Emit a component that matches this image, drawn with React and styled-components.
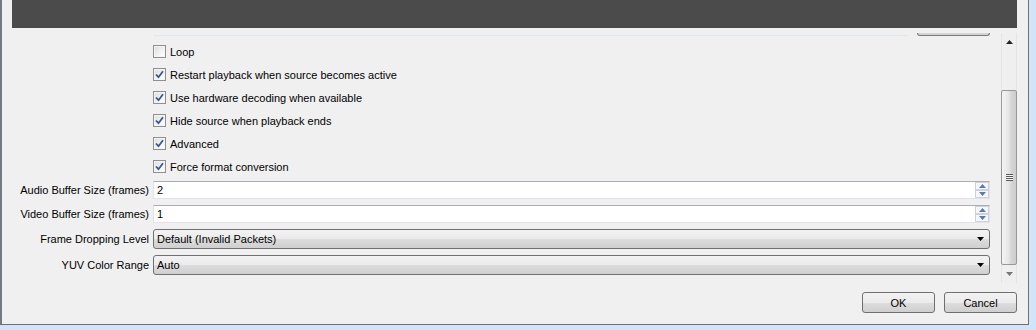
import React from "react";
import styled, { createGlobalStyle } from "styled-components";

// 설정 창 아래쪽 (미디어 소스 속성)
const GlobalStyle = createGlobalStyle`
  html, body {
    margin: 0;
    padding: 0;
    background: #d2e5f8;
  }
  body {
    font-family: "Liberation Sans", Arial, sans-serif;
    font-size: 11px;
    color: #000;
  }
`;

const checks = [
  { label: "Loop", checked: false },
  { label: "Restart playback when source becomes active", checked: true },
  { label: "Use hardware decoding when available", checked: true },
  { label: "Hide source when playback ends", checked: true },
  { label: "Advanced", checked: true },
  { label: "Force format conversion", checked: true },
];

const spins = [
  { label: "Audio Buffer Size (frames)", value: "2" },
  { label: "Video Buffer Size (frames)", value: "1" },
];

const combos = [
  { label: "Frame Dropping Level", value: "Default (Invalid Packets)" },
  { label: "YUV Color Range", value: "Auto" },
];

const Tick = () => (
  <svg width="9" height="9" viewBox="0 0 9 9">
    <path d="M1 4.5 L3.5 7.2 L8 1.2" fill="none" stroke="#3b5590" strokeWidth="1.8" />
  </svg>
);

const Arrow = ({ up, color = "#000", w = 7 }) => (
  <svg width={w} height={Math.ceil(w / 2) + 1} viewBox={`0 0 ${w} ${Math.ceil(w / 2) + 1}`}>
    {up ? (
      <polygon points={`0,${Math.ceil(w / 2)} ${w},${Math.ceil(w / 2)} ${w / 2},0`} fill={color} />
    ) : (
      <polygon points={`0,0 ${w},0 ${w / 2},${Math.ceil(w / 2)}`} fill={color} />
    )}
  </svg>
);

const App = () => {
  return (
    <>
      <GlobalStyle />
      <Window>
        <Preview />
        <Body>
          <ScrollArea>
            {/* 위로 스크롤 돼서 잘린 경로 입력칸 + 버튼 */}
            <Empty />
            <PathTail>
              <PathField />
              <PathButton />
            </PathTail>

            {checks.map((c, idx) => (
              <React.Fragment key={idx}>
                <Empty />
                <CheckRow>
                  <CheckBox>{c.checked && <Tick />}</CheckBox>
                  <span>{c.label}</span>
                </CheckRow>
              </React.Fragment>
            ))}

            {spins.map((s, idx) => (
              <React.Fragment key={idx}>
                <FieldLabel>{s.label}</FieldLabel>
                <SpinBox>
                  <SpinValue>{s.value}</SpinValue>
                  <SpinButtons>
                    <SpinBtn>
                      <Arrow up color="#5c78b0" />
                    </SpinBtn>
                    <SpinBtn>
                      <Arrow color="#5c78b0" />
                    </SpinBtn>
                  </SpinButtons>
                </SpinBox>
              </React.Fragment>
            ))}

            {combos.map((c, idx) => (
              <React.Fragment key={idx}>
                <FieldLabel>{c.label}</FieldLabel>
                <Combo>
                  <span>{c.value}</span>
                  <Arrow />
                </Combo>
              </React.Fragment>
            ))}
          </ScrollArea>

          <ScrollBar>
            <ScrollArrow>
              <Arrow up color="#222" />
            </ScrollArrow>
            <Track>
              <Thumb>
                <Grip />
              </Thumb>
            </Track>
            <ScrollArrow>
              <Arrow color="#777" />
            </ScrollArrow>
          </ScrollBar>
        </Body>

        <ButtonRow>
          <Button>OK</Button>
          <Button>Cancel</Button>
        </ButtonRow>
      </Window>
    </>
  );
};

const Window = styled.div`
  box-sizing: border-box;
  width: 1029px;
  height: 325px;
  background: #f0f0f0;
  border-left: 2px solid #737a82;
  border-right: 1px solid #6b7076;
  border-bottom: 1px solid #6b7076;
  padding: 0 11px 0 10px;
  display: flex;
  flex-direction: column;
`;

const Preview = styled.div`
  height: 28px;
  background: #4b4b4b;
  width: 1005px;
`;

const Body = styled.div`
  display: flex;
  margin-top: 5px;
  height: 250px;
`;

const ScrollArea = styled.div`
  width: 989px;
  padding-right: 11px;
  box-sizing: border-box;
  display: grid;
  grid-template-columns: 137px 1fr;
  column-gap: 4px;
  row-gap: 6px;
  align-content: start;
  align-items: center;
`;

const Empty = styled.div``;

const PathTail = styled.div`
  display: flex;
  align-items: flex-end;
  gap: 9px;
  height: 3px;
  margin-bottom: 1px;
`;

const PathField = styled.div`
  flex: 1;
  margin-left: 1px;
  height: 1px;
  background: #dfe8f1;
`;

const PathButton = styled.div`
  width: 71px;
  height: 2px;
  border: 1px solid #7a7a7a;
  border-top: none;
  border-radius: 0 0 3px 3px;
  background: #d4d4d4;
`;

const CheckRow = styled.label`
  display: flex;
  align-items: center;
  gap: 4px;
  height: 17px;
  white-space: nowrap;
`;

const CheckBox = styled.span`
  box-sizing: border-box;
  width: 13px;
  height: 13px;
  border: 1px solid #8f8f8f;
  background: linear-gradient(135deg, #dcdcdc, #f7f7f7 70%, #ffffff);
  box-shadow: inset 0 0 0 1px #f4f4f4;
  display: flex;
  align-items: center;
  justify-content: center;
`;

const FieldLabel = styled.div`
  text-align: right;
  white-space: nowrap;
`;

const SpinBox = styled.div`
  box-sizing: border-box;
  height: 18px;
  width: 837px;
  background: #fff;
  border: 1px solid #e2e3ea;
  border-top-color: #abadb3;
  display: flex;
  align-items: center;
  justify-content: space-between;
`;

const SpinValue = styled.span`
  padding-left: 3px;
`;

const SpinButtons = styled.div`
  display: flex;
  flex-direction: column;
  gap: 0px;
`;

const SpinBtn = styled.div`
  box-sizing: border-box;
  width: 14px;
  height: 8px;
  border: 1px solid #ccd3de;
  background: #f4f7fb;
  display: flex;
  align-items: center;
  justify-content: center;
`;

const Combo = styled.div`
  box-sizing: border-box;
  height: 20px;
  width: 837px;
  border: 1px solid #707070;
  border-radius: 3px;
  background: linear-gradient(#f2f2f2 0%, #ebebeb 50%, #dddddd 51%, #cfcfcf 100%);
  display: flex;
  align-items: center;
  justify-content: space-between;
  padding: 0 5px 0 3px;
`;

const ScrollBar = styled.div`
  box-sizing: border-box;
  width: 16px;
  border-left: 1px solid #e4e4e4;
  border-right: 1px solid #e4e4e4;
  background: #efefef;
  display: flex;
  flex-direction: column;
`;

const ScrollArrow = styled.div`
  height: 18px;
  display: flex;
  align-items: center;
  justify-content: center;
`;

const Track = styled.div`
  flex: 1;
  display: flex;
  flex-direction: column;
  justify-content: flex-end;
`;

const Thumb = styled.div`
  box-sizing: border-box;
  height: 175px;
  margin: 0 -1px;
  border: 1px solid #989898;
  border-radius: 2px;
  background: linear-gradient(to right, #f4f4f4, #e6e6e6 45%, #d4d4d4 70%, #cdcdcd);
  display: flex;
  align-items: center;
  justify-content: center;
`;

const Grip = styled.div`
  width: 7px;
  height: 7px;
  background: repeating-linear-gradient(#5a5a5a 0 1px, #f4f4f4 1px 2px);
`;

const ButtonRow = styled.div`
  display: flex;
  justify-content: flex-end;
  gap: 9px;
  margin-top: 9px;
`;

const Button = styled.button`
  box-sizing: border-box;
  width: 73px;
  height: 21px;
  border: 1px solid #707070;
  border-radius: 3px;
  background: linear-gradient(#f2f2f2 0%, #ebebeb 50%, #dddddd 51%, #cfcfcf 100%);
  font-family: "Liberation Sans", Arial, sans-serif;
  font-size: 11px;
  color: #000;
  padding: 0;
`;

export default App;
